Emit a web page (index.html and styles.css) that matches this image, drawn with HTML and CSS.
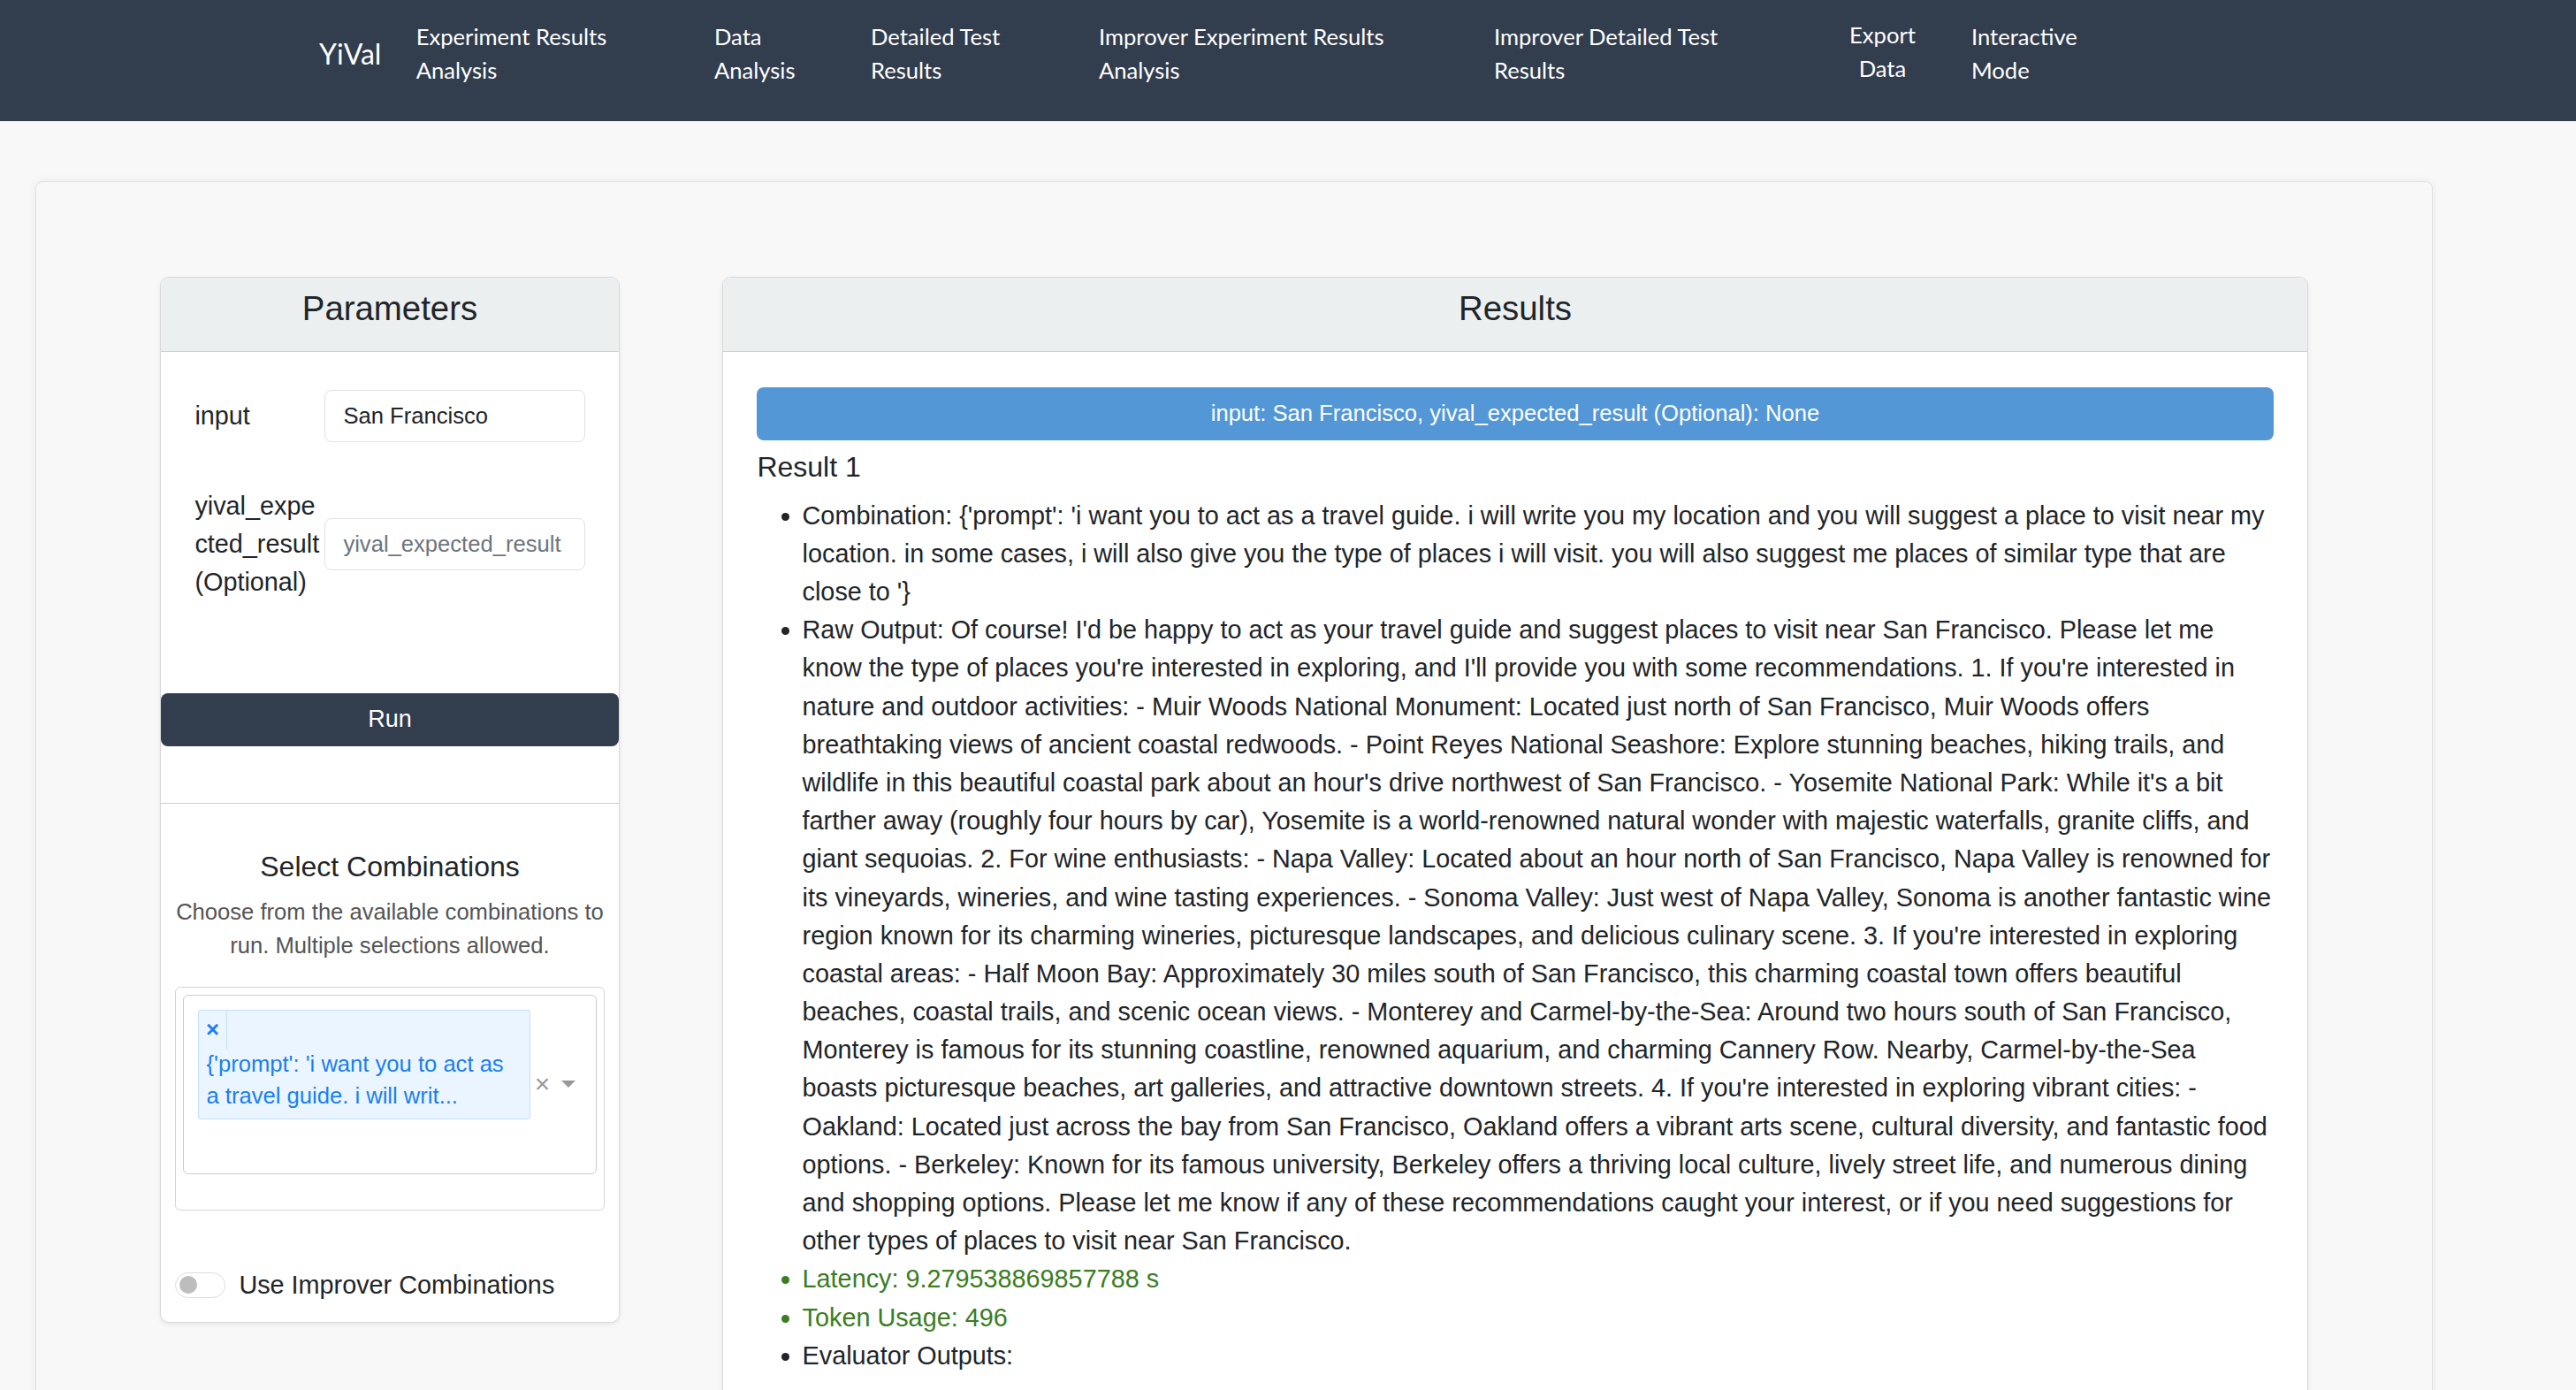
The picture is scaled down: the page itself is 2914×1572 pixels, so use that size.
FILE: index.html
```html
<!DOCTYPE html>
<html lang="en">
<head>
<meta charset="utf-8">
<title>YiVal</title>
<link rel="stylesheet" href="styles.css">
</head>
<body>
<nav class="navbar">
  <div class="nav-inner">
    <a class="brand">YiVal</a>
    <a class="nav-link nav-exp">Experiment Results Analysis</a>
    <a class="nav-link nav-data">Data Analysis</a>
    <a class="nav-link nav-detail">Detailed Test Results</a>
    <a class="nav-link nav-impexp">Improver Experiment Results Analysis</a>
    <a class="nav-link nav-impdet">Improver Detailed Test Results</a>
    <a class="nav-link nav-export">Export Data</a>
    <a class="nav-link nav-interactive">Interactive Mode</a>
  </div>
</nav>

<main class="page">
  <div class="panel">
    <div class="layout">
      <section class="card card-params">
        <div class="card-header"><h4 class="card-title">Parameters</h4></div>
        <div class="params-body">
          <div class="field">
            <label class="field-label">input</label>
            <input class="field-input" type="text" value="San Francisco">
          </div>
          <div class="field">
            <label class="field-label">yival_expected_result (Optional)</label>
            <input class="field-input" type="text" placeholder="yival_expected_result">
          </div>
        </div>
        <button class="run-btn">Run</button>
        <hr class="divider">
        <div class="combos">
          <h5 class="combos-title">Select Combinations</h5>
          <p class="combos-desc">Choose from the available combinations to run. Multiple selections allowed.</p>
          <div class="dropdown-wrap">
            <div class="select-control">
              <div class="select-values">
                <div class="chip">
                  <span class="chip-remove">×</span>
                  <span class="chip-label">{'prompt': 'i want you to act as a travel guide. i will writ...</span>
                </div>
              </div>
              <span class="select-clear">×</span>
              <span class="select-arrow"></span>
            </div>
          </div>
          <div class="switch-row">
            <span class="switch"><span class="knob"></span></span>
            <span class="switch-label">Use Improver Combinations</span>
          </div>
        </div>
      </section>

      <section class="card card-results">
        <div class="card-header"><h4 class="card-title">Results</h4></div>
        <div class="results-body">
          <div class="banner">input: San Francisco, yival_expected_result (Optional): None</div>
          <h5 class="result-title">Result 1</h5>
          <ul class="result-list">
            <li>Combination: {'prompt': 'i want you to act as a travel guide. i will write you my location and you will suggest a place to visit near my location. in some cases, i will also give you the type of places i will visit. you will also suggest me places of similar type that are close to '}</li>
            <li>Raw Output: Of course! I'd be happy to act as your travel guide and suggest places to visit near San Francisco. Please let me know the type of places you're interested in exploring, and I'll provide you with some recommendations. 1. If you're interested in nature and outdoor activities: - Muir Woods National Monument: Located just north of San Francisco, Muir Woods offers breathtaking views of ancient coastal redwoods. - Point Reyes National Seashore: Explore stunning beaches, hiking trails, and wildlife in this beautiful coastal park about an hour's drive northwest of San Francisco. - Yosemite National Park: While it's a bit farther away (roughly four hours by car), Yosemite is a world-renowned natural wonder with majestic waterfalls, granite cliffs, and giant sequoias. 2. For wine enthusiasts: - Napa Valley: Located about an hour north of San Francisco, Napa Valley is renowned for its vineyards, wineries, and wine tasting experiences. - Sonoma Valley: Just west of Napa Valley, Sonoma is another fantastic wine region known for its charming wineries, picturesque landscapes, and delicious culinary scene. 3. If you're interested in exploring coastal areas: - Half Moon Bay: Approximately 30 miles south of San Francisco, this charming coastal town offers beautiful beaches, coastal trails, and scenic ocean views. - Monterey and Carmel-by-the-Sea: Around two hours south of San Francisco, Monterey is famous for its stunning coastline, renowned aquarium, and charming Cannery Row. Nearby, Carmel-by-the-Sea boasts picturesque beaches, art galleries, and attractive downtown streets. 4. If you're interested in exploring vibrant cities: - Oakland: Located just across the bay from San Francisco, Oakland offers a vibrant arts scene, cultural diversity, and fantastic food options. - Berkeley: Known for its famous university, Berkeley offers a thriving local culture, lively street life, and numerous dining and shopping options. Please let me know if any of these recommendations caught your interest, or if you need suggestions for other types of places to visit near San Francisco.</li>
            <li class="ok">Latency: 9.279538869857788 s</li>
            <li class="ok">Token Usage: 496</li>
            <li>Evaluator Outputs:</li>
          </ul>
        </div>
      </section>
    </div>
  </div>
</main>
</body>
</html>
```

FILE: styles.css
```css
* { box-sizing: border-box; }

body {
  margin: 0;
  background: #f8f8f8;
  font-family: "Liberation Sans", Arial, Helvetica, sans-serif;
  color: #212529;
}

/* ---------- navbar ---------- */
.navbar {
  height: 137px;
  background: #323d4e;
}
.nav-inner {
  display: flex;
  align-items: flex-start;
  padding: 22px 0 0 361px;
  font-family: Lato, "Open Sans", sans-serif;
  color: #fff;
}
.brand {
  width: 109.7px;
  margin-top: 14.6px;
  font-size: 32px;
  line-height: 48px;
}
.nav-link {
  font-size: 25.6px;
  line-height: 38.4px;
}
.nav-exp { width: 337.3px; padding-right: 107.3px; }
.nav-data { width: 177px; padding-right: 77px; }
.nav-detail { width: 258px; padding-right: 78px; }
.nav-impexp { width: 447px; padding-right: 107px; }
.nav-impdet { width: 399.5px; padding-right: 129.5px; }
.nav-export {
  width: 140.5px;
  padding-right: 60.5px;
  text-align: center;
  line-height: 37.6px;
  margin-top: -1px;
}
.nav-interactive { width: 140px; padding-right: 10px; }

/* ---------- page ---------- */
.page {
  padding: 68px 0 0 40px;
}
.panel {
  width: 2712px;
  border: 1px solid #e0e0e0;
  border-radius: 8px;
  background: #f8f8f8;
  box-shadow: 0 0 12px rgba(0, 0, 0, 0.06);
  padding: 107px 140px 80px;
}
.layout {
  display: flex;
  align-items: flex-start;
  gap: 116px;
}

.card {
  background: #fff;
  border: 1px solid #d9d9d9;
  border-radius: 10px;
  overflow: hidden;
  box-shadow: 0 2px 5px rgba(0, 0, 0, 0.08);
}
.card-params { width: 520px; flex: none; }
.card-results { width: 1794px; flex: none; }

.card-header {
  background: #ebeff0;
  border-bottom: 1px solid #cdd2d4;
  padding: 12px 0 12px;
  text-align: center;
}
.card-title {
  margin: 0 0 12.8px;
  font-size: 38.4px;
  line-height: 1.2;
  font-weight: 400;
}

/* ---------- parameters ---------- */
.params-body {
  padding: 43px 38.4px 0;
}
.field {
  display: flex;
  align-items: center;
}
.field + .field { margin-top: 51px; }
.field-label {
  width: 147px;
  flex: none;
  font-size: 28.8px;
  line-height: 43.2px;
  word-break: break-all;
}
.field-input {
  flex: 1;
  min-width: 0;
  height: 59px;
  border: 1px solid #dee2e6;
  border-radius: 8px;
  padding: 0 20px;
  font-family: inherit;
  font-size: 25.6px;
  color: #212529;
  background: #fff;
  outline: none;
}
.field-input::placeholder { color: #6c757d; }

.run-btn {
  display: block;
  width: 100%;
  height: 60px;
  margin-top: 103.4px;
  border: 0;
  border-radius: 8px;
  background: #323d4e;
  color: #fff;
  font-family: inherit;
  font-size: 27px;
}
.divider {
  margin: 64px 0 0;
  border: 0;
  border-top: 1px solid #cccccc;
}

.combos {
  padding: 52px 16px 20px;
}
.combos-title {
  margin: 0 0 12.8px;
  font-size: 32px;
  line-height: 1.2;
  font-weight: 400;
  text-align: center;
}
.combos-desc {
  margin: 0 0 27px;
  font-size: 25.6px;
  line-height: 38.4px;
  color: #555;
  text-align: center;
}
.dropdown-wrap {
  border: 1px solid #d5d5d5;
  border-radius: 6px;
  padding: 8px 8px 40px;
}
.select-control {
  display: flex;
  align-items: center;
  min-height: 203px;
  border: 1px solid #cccccc;
  border-radius: 6px;
  background: #fff;
}
.select-values {
  flex: 1;
  align-self: flex-start;
  padding: 16px 0 0 16px;
}
.chip {
  width: 376px;
  background: #ebf5ff;
  border: 1px solid #c2e0ff;
  border-radius: 3px;
  color: #1a7ff0;
  font-size: 25.6px;
  line-height: 1.4;
}
.chip-remove {
  display: inline-block;
  width: 32px;
  height: 43px;
  border-right: 1px solid #c2e0ff;
  text-align: center;
  line-height: 43px;
  font-weight: bold;
}
.chip-label {
  display: block;
  padding: 0 12px 7px 8.5px;
}
.select-clear {
  width: 28px;
  margin-right: 8px;
  text-align: center;
  font-size: 30px;
  line-height: 1;
  color: #999;
}
.select-arrow {
  width: 0;
  height: 0;
  margin-right: 23px;
  border-style: solid;
  border-width: 8px 8px 0;
  border-color: #999 transparent transparent;
}

.switch-row {
  display: flex;
  align-items: center;
  gap: 15.4px;
  margin-top: 62.7px;
  font-size: 28.8px;
  line-height: 43.2px;
}
.switch {
  display: flex;
  align-items: center;
  width: 57px;
  height: 29px;
  padding-left: 4px;
  border: 1px solid #dddddd;
  border-radius: 15px;
  background: #fff;
}
.knob {
  width: 20px;
  height: 20px;
  border-radius: 50%;
  background: #bdbdbd;
}

/* ---------- results ---------- */
.results-body {
  padding: 40px 38.4px 200px;
}
.banner {
  display: flex;
  align-items: center;
  justify-content: center;
  height: 60px;
  margin-bottom: 10.8px;
  border-radius: 8px;
  background: #5497d6;
  color: #fff;
  font-size: 25.6px;
}
.result-title {
  margin: 0 0 14.6px;
  font-size: 32px;
  line-height: 1.2;
  font-weight: 400;
}
.result-list {
  margin: 0;
  padding-left: 51.2px;
  font-size: 28.8px;
  line-height: 1.5;
}
.ok { color: #3a7d22; }
```
